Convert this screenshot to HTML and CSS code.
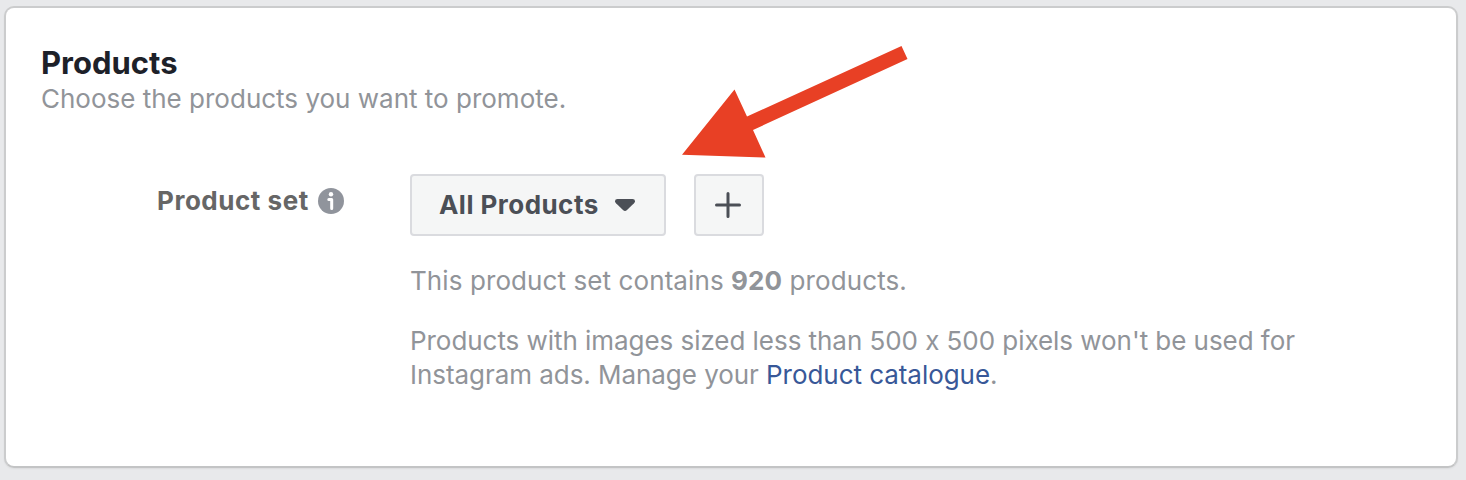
FILE: index.html
```
<!DOCTYPE html>
<html lang="en">

<head>
    <meta charset="UTF-8">
    <meta name="viewport" content="width=device-width, initial-scale=1.0">
    <title>Products</title>
    <link rel="stylesheet" href="styles.css">
</head>

<body>
    <section class="card">
        <h1>Products</h1>
        <p class="subtitle">Choose the products you want to promote.</p>

        <div class="form-row">
            <div class="form-label">
                <span>Product set</span>
                <svg class="info-icon" viewBox="0 0 26 26" aria-hidden="true">
                    <circle cx="13" cy="13" r="13" fill="#90949c" />
                    <circle cx="13" cy="6.300" r="2.200" fill="#fff" />
                    <path d="M10.800 11.500h2.900v9" fill="none" stroke="#fff" stroke-width="3" stroke-linecap="round" stroke-linejoin="round" />
                </svg>
            </div>

            <div class="form-content">
                <div class="controls">
                    <button class="btn select-btn" type="button">
                        <span>All Products</span>
                        <svg class="caret" viewBox="0 0 20 12" aria-hidden="true">
                            <path d="M2.500 0h15Q20 0 20 2.200Q20 3.300 19 4.300L12 11Q10 12.800 8 11L1 4.300Q0 3.300 0 2.200Q0 0 2.500 0z" fill="#4b4f56" />
                        </svg>
                    </button>
                    <button class="btn add-btn" type="button" aria-label="Add">
                        <svg class="plus" viewBox="0 0 26 26" aria-hidden="true">
                            <path d="M13 1.500v23M1.500 13h23" stroke="#4b4f56" stroke-width="3" stroke-linecap="round" />
                        </svg>
                    </button>
                </div>
                <p class="count">This product set contains <b>920</b> products.</p>
                <p class="note">
                    Products with images sized less than 500 x 500 pixels won't be used for<br>
                    Instagram ads. Manage your <a href="#">Product catalogue</a>.
                </p>
            </div>
        </div>

        <!-- Arrow pointing at the product set controls -->
        <svg class="arrow" viewBox="0 0 226 114" aria-hidden="true">
            <path d="M0 108.700L52.500 43.500l12.500 27L219.500 0l6 13L71 84l12.500 27.500z" fill="#e84025" />
        </svg>
    </section>
</body>

</html>
```
FILE: styles.css
```
* {
    box-sizing: border-box;
}

body,
h1,
p {
    margin: 0;
}

body {
    background-color: #e8e9eb;
    padding: 6px 8px 0 4px;
    height: 480px;
    overflow: hidden;
    font-family: Inter, "Liberation Sans", sans-serif;
    font-size: 26px;
    line-height: 34px;
    font-feature-settings: "calt" 0;
    color: #919499;
}

/* Card */
.card {
    position: relative;
    height: 462px;
    padding: 37px 36px 0 35px;
    background-color: #fff;
    border: 2px solid #cbcccd;
    border-bottom-color: #c3c4c5;
    border-radius: 10px;
    box-shadow: 0 1px 2px rgba(0, 0, 0, 0.06);
}

h1 {
    font-size: 31px;
    line-height: 36px;
    font-weight: 700;
    color: #1d2129;
}

.subtitle {
    margin-top: 1px;
}

/* Product set row */
.form-row {
    display: flex;
    margin-top: 58px;
}

.form-label {
    display: flex;
    align-items: center;
    gap: 9px;
    width: 369px;
    height: 54px;
    padding-left: 116px;
    font-weight: 700;
    letter-spacing: 0.54px;
    color: #666;
}

.info-icon {
    width: 26px;
    height: 26px;
}

.controls {
    display: flex;
    gap: 28px;
}

.btn {
    display: flex;
    align-items: center;
    height: 62px;
    padding: 0;
    background-color: #f5f6f6;
    border: 2px solid #dadbdf;
    border-radius: 4px;
    font: inherit;
    font-weight: 700;
    color: #4b4f56;
}

.select-btn {
    width: 256px;
    padding-left: 27px;
    gap: 16px;
    letter-spacing: 0.46px;
}

.caret {
    width: 20px;
    height: 12px;
}

.add-btn {
    width: 70px;
    padding-right: 2px;
    justify-content: center;
}

.plus {
    width: 26px;
    height: 26px;
}

.count {
    margin-top: 28px;
    letter-spacing: 0.09px;
}

.note {
    margin-top: 26px;
    letter-spacing: -0.05px;
}

.note a {
    color: #385898;
    text-decoration: none;
}

.arrow {
    position: absolute;
    left: 676px;
    top: 38px;
    width: 226px;
    height: 114px;
}
```
